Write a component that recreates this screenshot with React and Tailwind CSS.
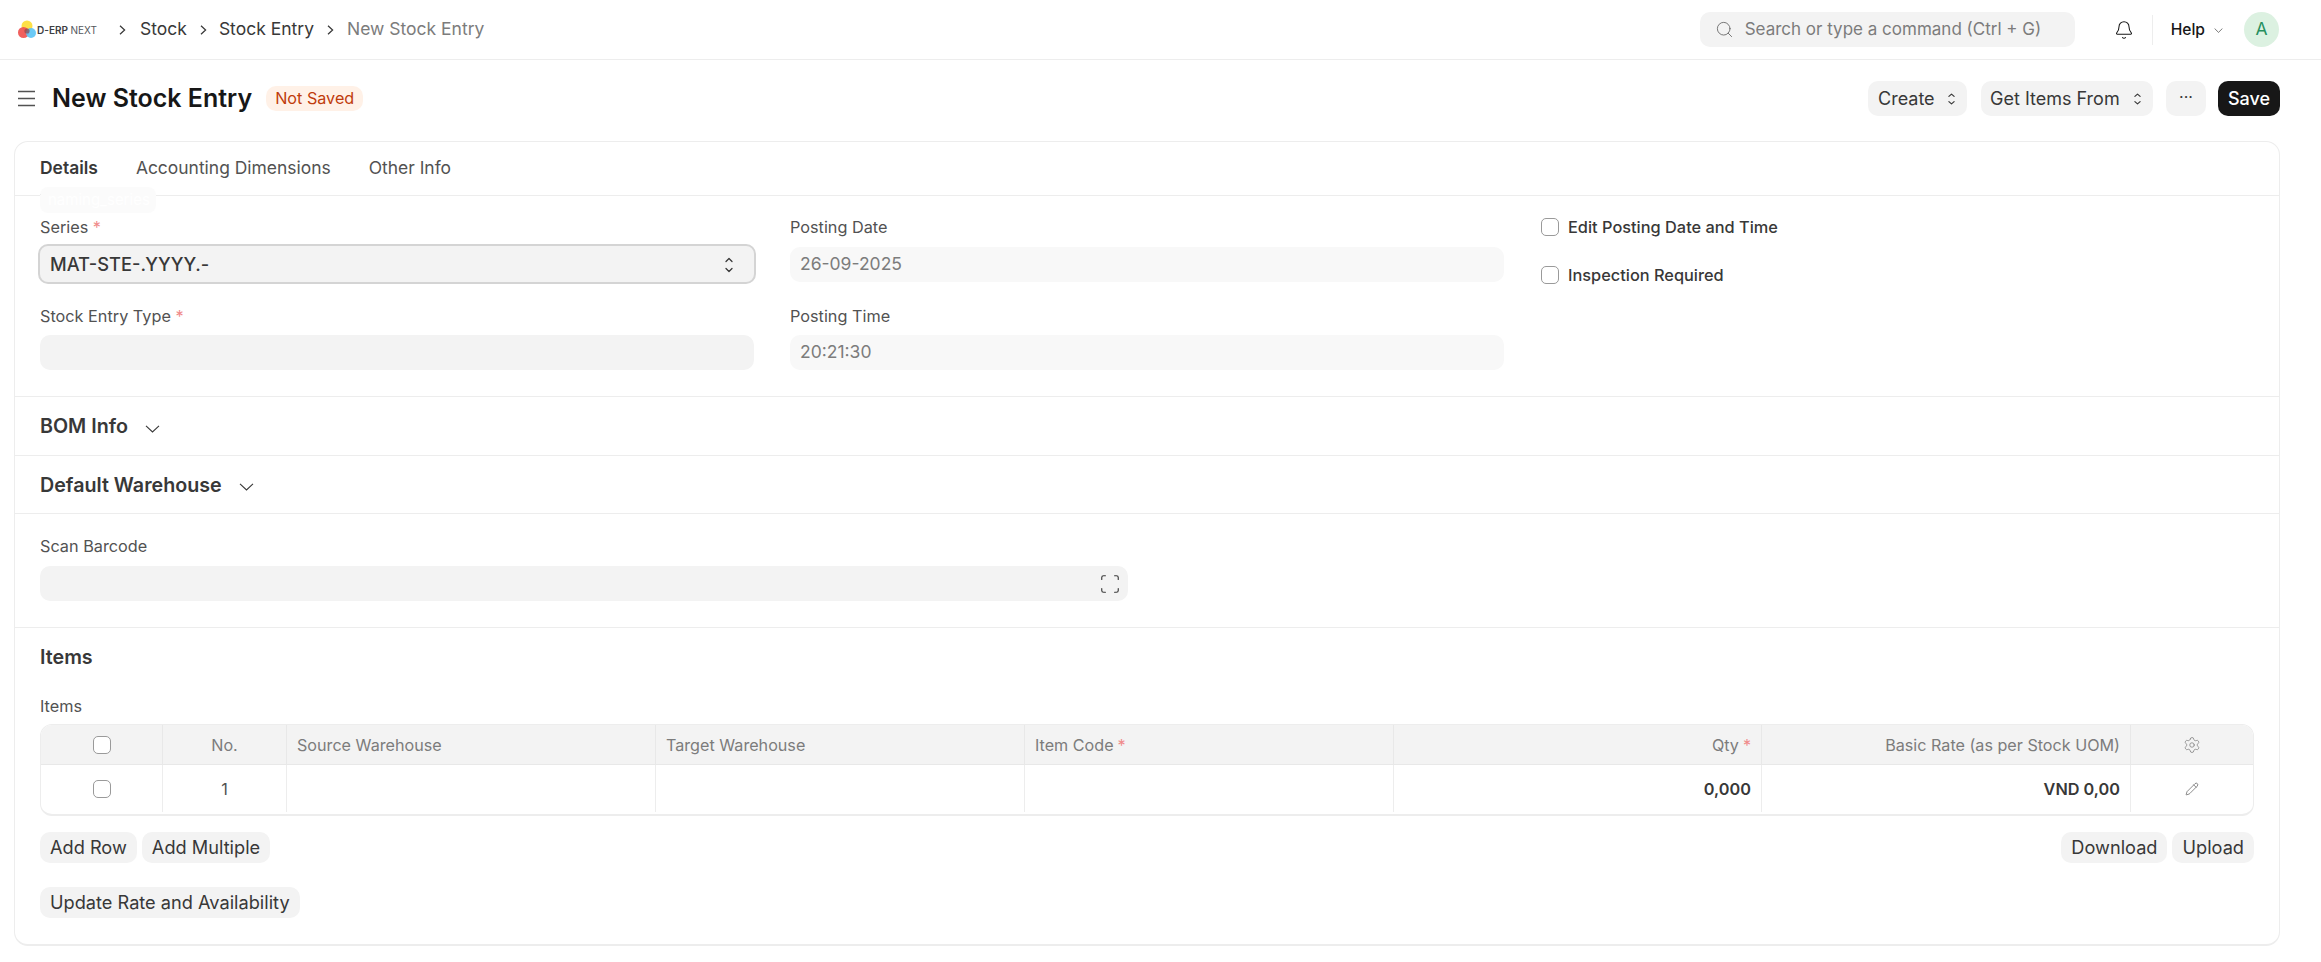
import React from "react";
import { Bell, Pencil, Scan, Search, Settings } from "lucide-react";

const UpDown = ({ className = "" }) => (
  <svg viewBox="0 0 8 16" preserveAspectRatio="none" fill="none" stroke="currentColor" strokeWidth="1.3" strokeLinecap="round" strokeLinejoin="round" className={className}>
    <path d="M1 4.5L4 1.5L7 4.5" />
    <path d="M1 11.5L4 14.5L7 11.5" />
  </svg>
);

const ChevRight = ({ className = "" }) => (
  <svg width="7" height="10" viewBox="0 0 7 10" fill="none" stroke="currentColor" strokeWidth="1.25" className={`shrink-0 ${className}`}>
    <path d="M1 .8L5.6 5L1 9.2" />
  </svg>
);

const ChevDown = ({ w = 15, h = 8, className = "" }) => (
  <svg width={w} height={h} viewBox="0 0 15 8" preserveAspectRatio="none" fill="none" stroke="currentColor" strokeWidth="1.1" className={`shrink-0 ${className}`}>
    <path d="M1 .8L7.5 7L14 .8" />
  </svg>
);

const Logo = () => (
  <div className="flex items-center w-[97px] ml-[18px]">
    <svg width="19" height="19" viewBox="0 0 19 19" className="shrink-0">
      <circle cx="9" cy="6" r="5.5" fill="#fde047" />
      <circle cx="5.5" cy="12.5" r="5.5" fill="#ef5350" fillOpacity="0.92" />
      <circle cx="13" cy="13" r="5" fill="#5cc4f5" fillOpacity="0.9" />
      <circle cx="9" cy="11" r="2.6" fill="#8a4a52" fillOpacity="0.7" />
    </svg>
    <span className="text-[10px] leading-none font-semibold text-[#3d4043] whitespace-nowrap">
      D-ERP <span className="font-normal text-[#55585c]">NEXT</span>
    </span>
  </div>
);

const Navbar = () => (
  <header className="h-[60px] border-b border-[#ededed] flex items-center pr-[42px]">
    <Logo />
    <nav className="flex items-center ml-[4px] text-[17.5px] text-[#383838]">
      <ChevRight />
      <span className="ml-[14px]">Stock</span>
      <ChevRight className="ml-[13px] mr-[12px]" />
      <span>Stock Entry</span>
      <ChevRight className="ml-[13px] mr-[13px]" />
      <span className="text-[#7c7c7c]">New Stock Entry</span>
    </nav>
    <div className="ml-auto flex items-center">
      <div className="w-[375px] h-[35px] rounded-[10px] bg-[#f3f3f3] flex items-center pl-[15px] text-[17px] text-[#7c7c7c]">
        <Search size={19} strokeWidth={1.1} className="mr-[11px] text-[#666]" />
        Search or type a command (Ctrl + G)
      </div>
      <Bell size={20} strokeWidth={1.25} className="ml-[39px] text-[#171717]" />
      <div className="w-px h-[30px] bg-[#ededed] ml-[18px]" />
      <span className="ml-[18px] text-[15.6px] font-medium text-[#171717]">Help</span>
      <ChevDown w={9} h={5} className="ml-[9px] mt-[2px] text-[#383838]" />
      <div className="ml-[21px] w-[35px] h-[35px] rounded-full bg-[#dcf1e1] text-[#278f5e] flex items-center justify-center text-[17.5px]">A</div>
    </div>
  </header>
);

const Btn = ({ children, className = "" }) => (
  <button className={`h-[31px] px-[10px] rounded-[10px] bg-[#f3f3f3] text-[18.2px] text-[#383838] whitespace-nowrap ${className}`}>
    {children}
  </button>
);

const PageHead = () => (
  <div className="h-[81px] flex items-center pb-[4px] pl-[18px] pr-[41px]">
    <svg width="17" height="17" viewBox="0 0 17 17" fill="none" stroke="#525252" strokeWidth="1.3" className="shrink-0">
      <path d="M0 1.5H17M0 8.5H17M0 15.5H17" />
    </svg>
    <h1 className="ml-[17px] text-[25px] font-semibold text-[#171717]">New Stock Entry</h1>
    <span className="ml-[14px] h-[25px] px-[9px] rounded-[10px] bg-[#fff1e7] text-[#bf3c0c] text-[16.2px] flex items-center">Not Saved</span>
    <div className="ml-auto flex items-center">
      <button className="h-[35px] w-[99px] pl-[10px] pr-[12px] rounded-[10px] bg-[#f3f3f3] text-[18px] text-[#383838] flex items-center justify-between">
        Create <UpDown className="w-[7px] h-[12px]" />
      </button>
      <button className="ml-[14px] h-[35px] w-[172px] pl-[9px] pr-[12px] rounded-[10px] bg-[#f3f3f3] text-[18px] text-[#383838] flex items-center justify-between whitespace-nowrap">
        Get Items From <UpDown className="w-[7px] h-[12px]" />
      </button>
      <button className="ml-[13px] h-[35px] w-[40px] rounded-[10px] bg-[#f3f3f3] text-[#383838] text-[16px] leading-none pb-1">···</button>
      <button className="ml-[12px] h-[35px] w-[62px] rounded-[10px] bg-[#171717] text-white text-[18px] font-medium">Save</button>
    </div>
  </div>
);

const Tabs = () => (
  <div className="relative h-[54px] border-b border-[#ededed] flex pl-[25px] text-[17.45px] gap-[38px]">
    <div className="h-[54px] border-b-[2px] border-[#171717] flex items-center font-semibold text-[#383838]">Details</div>
    <div className="flex items-center text-[#525252]">Accounting Dimensions</div>
    <div className="flex items-center text-[#525252]">Other Info</div>
    <div className="absolute left-[25px] top-[45px] w-[116px] h-[26px] rounded-[8px] bg-[#fbfbfb] text-[#ffffff] text-[15px] px-2 leading-[26px]">naming_series</div>
  </div>
);

const Label = ({ children, required }) => (
  <div className="h-[20px] text-[16.25px] leading-[20px] text-[#525252] whitespace-nowrap">
    {children} {required && <span className="text-[#f08a8a]">*</span>}
  </div>
);

const Field = ({ label, required, value, focused, top = "mt-[9px]" }) => (
  <div>
    <Label required={required}>{label}</Label>
    {focused ? (
      <div className="mt-[7px] h-[40px] -mx-[2px] rounded-[10px] bg-[#f3f3f3] border-[2px] border-[#d4d4d4] flex items-center justify-between pl-[10px] pr-[21px] pt-[1px] text-[18.3px] font-medium text-[#383838]">
        {value}
        <UpDown className="w-[8px] h-[16px]" />
      </div>
    ) : (
      <div className={`${top} h-[35px] rounded-[10px] flex items-center px-[10px] text-[17.5px] text-[#7c7c7c] ${value ? "bg-[#f8f8f8]" : "bg-[#f3f3f3]"}`}>
        {value}
      </div>
    )}
  </div>
);

const Check = ({ label }) => (
  <label className="flex items-center gap-[9px] h-[20px] text-[16.35px] font-medium text-[#383838] whitespace-nowrap">
    <span className="w-[18px] h-[18px] rounded-[5px] border border-[#9a9a9a] bg-white" />
    {label}
  </label>
);

const MainFields = () => (
  <div className="h-[201px] border-b border-[#ededed] grid grid-cols-[714px_714px_1fr] gap-x-[36px] pl-[25px] pt-[21px]">
    <div className="flex flex-col gap-[22px]">
      <Field label="Series" required value="MAT-STE-.YYYY.-" focused />
      <Field label="Stock Entry Type" required />
    </div>
    <div className="flex flex-col gap-[24px]">
      <Field label="Posting Date" value="26-09-2025" top="mt-[10px]" />
      <Field label="Posting Time" value="20:21:30" />
    </div>
    <div className="flex flex-col gap-[28px] pl-[1px]">
      <Check label="Edit Posting Date and Time" />
      <Check label="Inspection Required" />
    </div>
  </div>
);

const Collapsed = ({ title, height }) => (
  <div className={`${height} border-b border-[#ededed] flex items-center pl-[25px] pt-[2px] text-[19.7px] font-semibold text-[#383838]`}>
    {title}
    <ChevDown className="ml-[17px] mt-[3px] text-[#383838]" />
  </div>
);

const th = "flex items-center px-[10px] pt-[1px] border-r border-[#e8e8e8] text-[16.15px] text-[#7c7c7c] whitespace-nowrap";
const td = "flex items-center px-[10px] pt-[1px] border-r border-[#ededed] h-[47px] text-[#383838]";
const TBox = () => <span className="w-[18px] h-[18px] rounded-[5px] border border-[#9a9a9a] bg-white" />;
const Req = () => <span className="text-[#f08a8a] ml-[4px]">*</span>;

const ItemsTable = () => (
  <div className="ml-[25px] w-[2214px] rounded-[12px] border border-[#ededed] border-b-[2px] overflow-hidden">
    <div className="grid grid-cols-[122px_124px_369px_369px_369px_368px_369px_122px] h-[40px] bg-[#f3f3f3] border-b border-[#e8e8e8]">
      <div className={`${th} justify-center`}><TBox /></div>
      <div className={`${th} justify-center`}>No.</div>
      <div className={th}>Source Warehouse</div>
      <div className={th}>Target Warehouse</div>
      <div className={th}>Item Code<Req /></div>
      <div className={`${th} justify-end`}>Qty<Req /></div>
      <div className={`${th} justify-end`}>Basic Rate (as per Stock UOM)</div>
      <div className="flex items-center justify-center text-[#7c7c7c]"><Settings size={18} strokeWidth={1} /></div>
    </div>
    <div className="grid grid-cols-[122px_124px_369px_369px_369px_368px_369px_122px] h-[49px]">
      <div className={`${td} justify-center`}><TBox /></div>
      <div className={`${td} justify-center text-[16.25px] text-[#525252]`}>1</div>
      <div className={td} />
      <div className={td} />
      <div className={td} />
      <div className={`${td} justify-end text-[16.25px] font-semibold`}>0,000</div>
      <div className={`${td} justify-end text-[16.25px] font-semibold`}>VND 0,00</div>
      <div className="flex items-center justify-center h-[47px] pt-[1px] text-[#383838]"><Pencil size={14} strokeWidth={1} /></div>
    </div>
  </div>
);

const ScanSection = () => (
  <div className="h-[114px] border-b border-[#ededed] pl-[25px] pt-[22px]">
    <Label>Scan Barcode</Label>
    <div className="mt-[10px] w-[1088px] h-[35px] rounded-[10px] bg-[#f3f3f3] flex items-center justify-end pr-[7px]">
      <Scan size={22} strokeWidth={1.25} className="text-[#383838]" />
    </div>
  </div>
);

const ItemsSection = () => (
  <div className="pt-[19px]">
    <h2 className="pl-[25px] h-[20px] leading-[20px] text-[19.7px] font-semibold text-[#383838]">Items</h2>
    <div className="pl-[25px] mt-[29px]"><Label>Items</Label></div>
    <div className="mt-[8px]"><ItemsTable /></div>
    <div className="mt-[16px] pl-[25px] pr-[25px] flex gap-[5px]">
      <Btn>Add Row</Btn>
      <Btn>Add Multiple</Btn>
      <Btn className="ml-auto">Download</Btn>
      <Btn>Upload</Btn>
    </div>
    <div className="mt-[24px] pl-[25px] pb-[26px]"><Btn>Update Rate and Availability</Btn></div>
  </div>
);

export default function App() {
  return (
    <div className="min-h-[962px] bg-white font-['Inter',sans-serif]">
      <Navbar />
      <PageHead />
      <main className="ml-[14px] mr-[41px] rounded-[14px] border border-[#ededed] border-b-[2px]">
        <Tabs />
        <MainFields />
        <Collapsed title="BOM Info" height="h-[59px]" />
        <Collapsed title="Default Warehouse" height="h-[58px]" />
        <ScanSection />
        <ItemsSection />
      </main>
    </div>
  );
}
